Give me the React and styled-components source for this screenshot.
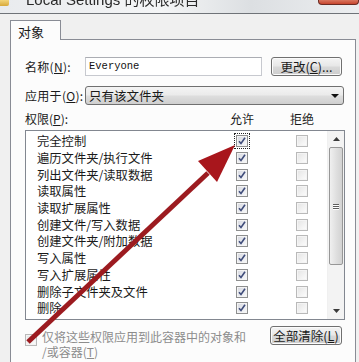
import React from 'react';
import styled, { createGlobalStyle } from 'styled-components';

const GlobalStyle = createGlobalStyle`
  html, body {
    margin: 0;
    padding: 0;
    background: #f0f0f0;
    overflow: hidden;
  }
`;

const cjk = `"Noto Sans CJK SC", "Liberation Sans", sans-serif`;

// whole dialog
const Window = styled.div`
  position: relative;
  width: 359px;
  height: 362px;
  overflow: hidden;
  display: flex;
  flex-direction: column;
  background: #f0f0f0;
  font-family: ${cjk};
  font-size: 12px;
  color: #1a1a1a;
`;

const TitleBar = styled.div`
  height: 13px;
  flex: none;
  display: flex;
  align-items: flex-end;
  background: linear-gradient(90deg, #e9ebee 0%, #f4f5f6 45%, #dcdfe2 70%, #eceef0 100%);
  border-bottom: 1px solid #6f7378;
  overflow: hidden;
`;

const Folder = styled.div`
  width: 9px;
  height: 6px;
  margin-bottom: 7px;
  background: linear-gradient(#f3d57a, #d8a93a);
  border-radius: 0 0 2px 0;
  flex: none;
`;

const TitleText = styled.div`
  margin-left: 17px;
  margin-bottom: 6px;
  font-family: "Liberation Sans", ${cjk};
  font-size: 15px;
  line-height: 15px;
  color: #2a2a2a;
  filter: blur(0.5px);
  white-space: nowrap;
`;

const CloseBtn = styled.div`
  margin-left: auto;
  align-self: flex-start;
  width: 39px;
  height: 4px;
  background: linear-gradient(#d9765f, #c7452e);
  border: 1px solid #6b2a22;
  border-top: none;
  border-radius: 0 0 4px 4px;
`;

const Body = styled.div`
  flex: 1;
  padding: 6px 3px 0 10px;
  display: flex;
  flex-direction: column;
`;

const Tabs = styled.div`
  display: flex;
  position: relative;
  z-index: 1;
  margin-bottom: -1px;
`;

const Tab = styled.div`
  width: 51px;
  height: 20px;
  box-sizing: border-box;
  padding: 1px 0 0 7px;
  border: 1px solid #898c95;
  border-bottom: none;
  background: #fcfcfc;
  font-size: 13px;
  line-height: 20px;
`;

const Panel = styled.div`
  flex: 1;
  border: 1px solid #898c95;
  border-bottom: none;
  background: #fcfcfc;
  padding: 17px 0 0 14px;
  display: flex;
  flex-direction: column;
`;

const FieldRow = styled.div`
  display: flex;
  align-items: center;
  height: 19px;
  margin-bottom: ${({ gap }) => gap || 0}px;
`;

const Label = styled.div`
  width: 60px;
  flex: none;
  white-space: nowrap;
  letter-spacing: 0.3px;
`;

const TextBox = styled.div`
  width: 177px;
  height: 19px;
  box-sizing: border-box;
  border: 1px solid #c7c9cf;
  border-top-color: #abadb3;
  background: #fff;
  padding-left: 3px;
  font-family: "Liberation Mono", monospace;
  font-size: 10.5px;
  line-height: 17px;
  color: #111;
`;

const Button = styled.div`
  width: ${({ w }) => w}px;
  height: 19px;
  box-sizing: border-box;
  margin-left: ${({ ml }) => ml || 0}px;
  border: 1px solid #707070;
  border-radius: 3px;
  background: linear-gradient(#f4f4f4 0%, #e8e8e8 45%, #d8d8d8 55%, #cdcdcd 100%);
  box-shadow: inset 0 0 0 1px #fbfbfb;
  display: flex;
  align-items: center;
  justify-content: center;
  font-size: 12.5px;
  line-height: 17px;
  white-space: nowrap;
`;

const Combo = styled.div`
  width: 259px;
  height: 19px;
  box-sizing: border-box;
  border: 1px solid #707070;
  border-radius: 3px;
  background: linear-gradient(#f4f4f4 0%, #ebebeb 45%, #dddddd 55%, #cfcfcf 100%);
  display: flex;
  align-items: center;
  padding: 0 4px 0 3px;
  font-size: 12.5px;
`;

const ComboArrow = styled.div`
  margin-left: auto;
  width: 0;
  height: 0;
  border-left: 4px solid transparent;
  border-right: 4px solid transparent;
  border-top: 4px solid #111;
`;

const PermHeader = styled.div`
  display: grid;
  grid-template-columns: 205px 24px 36px 24px;
  align-items: end;
  height: 19px;
  margin-top: 3px;
`;

const HeadCell = styled.div`
  white-space: nowrap;
  display: flex;
  justify-content: ${({ center }) => (center ? 'center' : 'flex-start')};
`;

const ListBox = styled.div`
  margin-top: 3px;
  width: 320px;
  height: 190px;
  box-sizing: border-box;
  border: 1px solid #828790;
  background: #fff;
  display: flex;
`;

const Rows = styled.div`
  flex: 1;
  padding: 2px 0 0 11px;
  display: grid;
  grid-template-columns: 193px 24px 36px 24px;
  grid-auto-rows: 16.7px;
  align-content: start;
  align-items: center;
`;

const RowName = styled.div`
  white-space: nowrap;
  font-size: 12.3px;
`;

const CheckCell = styled.div`
  display: flex;
  justify-content: center;
  align-items: center;
`;

const Focus = styled.div`
  display: flex;
  padding: 2px;
  outline: 1px dotted #222;
  outline-offset: -1px;
`;

const Scrollbar = styled.div`
  width: 16px;
  flex: none;
  background: #f3f3f3;
  border-left: 1px solid #f0f0f0;
  display: flex;
  flex-direction: column;
  align-items: center;
`;

const ScrollArrow = styled.div`
  height: 16px;
  display: flex;
  align-items: center;
  justify-content: center;
  margin-top: ${({ bottom }) => (bottom ? 'auto' : '0')};
`;

const Thumb = styled.div`
  width: 14px;
  height: 118px;
  box-sizing: border-box;
  border: 1px solid #979797;
  border-radius: 2px;
  background: linear-gradient(90deg, #f0f0f0, #e0e0e0 50%, #d2d2d2);
  display: flex;
  align-items: center;
  justify-content: center;
`;

const Grip = styled.div`
  width: 6px;
  display: flex;
  flex-direction: column;
  gap: 1px;
  span {
    height: 1px;
    background: #5e5e5e;
    box-shadow: 0 1px 0 #fff;
  }
`;

const BottomRow = styled.div`
  display: flex;
  align-items: flex-start;
  margin-top: 6px;
`;

const Inherit = styled.div`
  display: flex;
  align-items: flex-start;
  width: 245px;
  padding-top: 8px;
`;

const InheritText = styled.div`
  margin-left: 5px;
  margin-top: -5px;
  line-height: 15px;
  color: #8c8c8c;
  font-size: 12px;
`;

const Arrow = styled.svg`
  position: absolute;
  left: 0;
  top: 0;
  pointer-events: none;
`;

function CheckBox({ checked, disabled }) {
  return (
    <svg width="12" height="12" viewBox="0 0 12 12">
      <defs>
        <linearGradient id={disabled ? 'cbd' : 'cbe'} x1="0" y1="0" x2="1" y2="1">
          <stop offset="0" stopColor={disabled ? '#e6e6e6' : '#d9dbe2'} />
          <stop offset="1" stopColor={disabled ? '#fbfbfb' : '#f6f7f9'} />
        </linearGradient>
      </defs>
      <rect x="0.5" y="0.5" width="11" height="11" fill="#f4f4f4" stroke={disabled ? '#b9b9b9' : '#8e8f8f'} />
      <rect x="2" y="2" width="8" height="8" fill={`url(#${disabled ? 'cbd' : 'cbe'})`} />
      {checked && (
        <path d="M3 6.2 L5 8.5 L9 2.8" fill="none" stroke="#3f4c7a" strokeWidth="1.6" />
      )}
    </svg>
  );
}

const rows = [
  '完全控制',
  '遍历文件夹/执行文件',
  '列出文件夹/读取数据',
  '读取属性',
  '读取扩展属性',
  '创建文件/写入数据',
  '创建文件夹/附加数据',
  '写入属性',
  '写入扩展属性',
  '删除子文件夹及文件',
  '删除',
];

export default function App() {
  return (
    <>
      <GlobalStyle />
      <Window>
        <TitleBar>
          <Folder />
          <TitleText>Local Settings 的权限项目</TitleText>
          <CloseBtn />
        </TitleBar>
        <Body>
          <Tabs>
            <Tab>对象</Tab>
          </Tabs>
          <Panel>
            <FieldRow gap={10}>
              <Label>名称(<u>N</u>):</Label>
              <TextBox>Everyone</TextBox>
              <Button w={71} ml={9}>更改(<u>C</u>)...</Button>
            </FieldRow>
            <FieldRow>
              <Label>应用于(<u>O</u>):</Label>
              <Combo>
                只有该文件夹
                <ComboArrow />
              </Combo>
            </FieldRow>
            <PermHeader>
              <HeadCell>权限(<u>P</u>):</HeadCell>
              <HeadCell center>允许</HeadCell>
              <span />
              <HeadCell center>拒绝</HeadCell>
            </PermHeader>
            <ListBox>
              <Rows>
                {rows.map((r, i) => (
                  <React.Fragment key={r}>
                    <RowName>{r}</RowName>
                    <CheckCell>
                      {i === 0 ? (
                        <Focus>
                          <CheckBox checked />
                        </Focus>
                      ) : (
                        <CheckBox checked />
                      )}
                    </CheckCell>
                    <span />
                    <CheckCell>
                      <CheckBox disabled />
                    </CheckCell>
                  </React.Fragment>
                ))}
              </Rows>
              <Scrollbar>
                <ScrollArrow>
                  <svg width="7" height="4" viewBox="0 0 7 4">
                    <path d="M0 4 L3.5 0 L7 4 Z" fill="#3a3a3a" />
                  </svg>
                </ScrollArrow>
                <Thumb>
                  <Grip>
                    <span />
                    <span />
                    <span />
                  </Grip>
                </Thumb>
                <ScrollArrow bottom>
                  <svg width="7" height="4" viewBox="0 0 7 4">
                    <path d="M0 0 L7 0 L3.5 4 Z" fill="#3a3a3a" />
                  </svg>
                </ScrollArrow>
              </Scrollbar>
            </ListBox>
            <BottomRow>
              <Inherit>
                <CheckBox disabled />
                <InheritText>
                  仅将这些权限应用到此容器中的对象和
                  <br />
                  /或容器(<u>T</u>)
                </InheritText>
              </Inherit>
              <Button w={72}>全部清除(<u>L</u>)</Button>
            </BottomRow>
          </Panel>
        </Body>
        <Arrow width="359" height="362" viewBox="0 0 359 362">
          <line x1="28" y1="342" x2="208" y2="173" stroke="#9c1b20" strokeWidth="5" />
          <polygon points="235,145 198,161 217,182" fill="#a8161c" />
        </Arrow>
      </Window>
    </>
  );
}
